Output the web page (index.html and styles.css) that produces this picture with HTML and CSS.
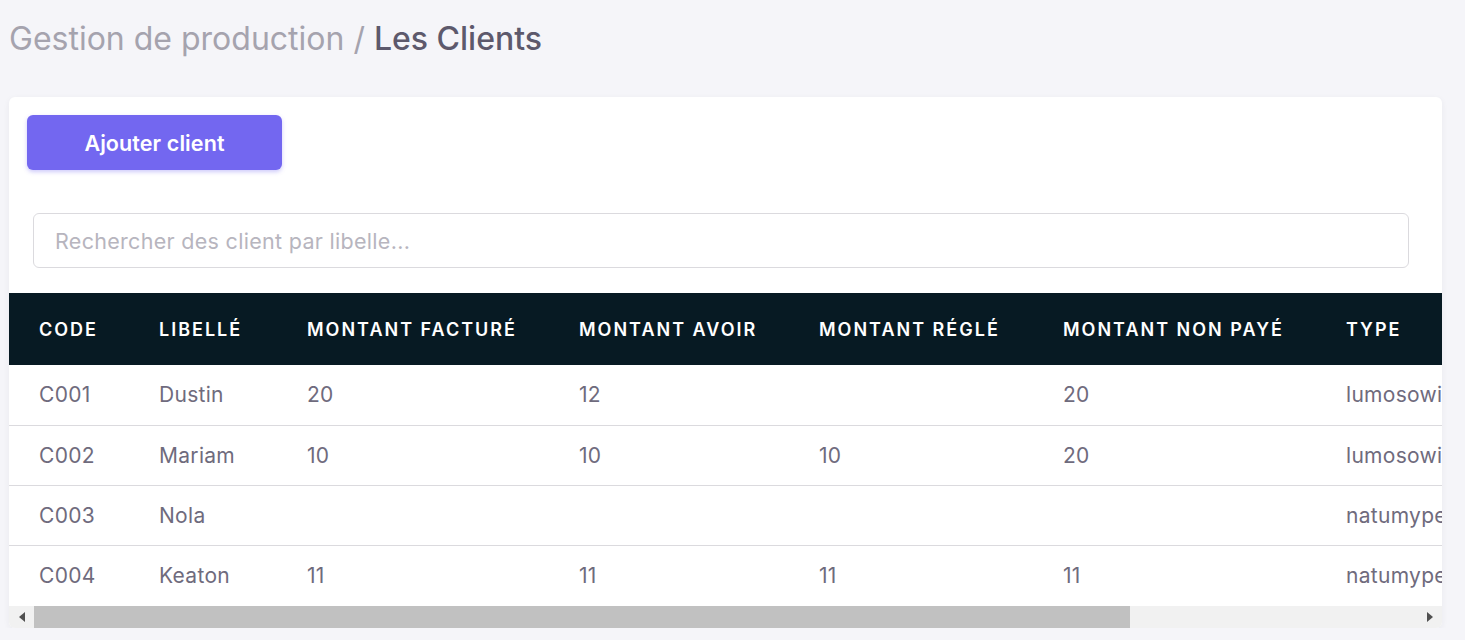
FILE: index.html
```html
<!DOCTYPE html>
<html lang="fr">
<head>
<meta charset="utf-8">
<title>Les Clients</title>
<link rel="stylesheet" href="styles.css">
</head>
<body>
<div class="page">
  <h1 class="title"><span class="crumb">Gestion de production /</span> <span class="current">Les Clients</span></h1>
  <div class="card">
    <div class="card-top">
      <button class="btn-primary" type="button">Ajouter client</button>
    </div>
    <div class="search-wrap">
      <input class="search" type="text" placeholder="Rechercher des client par libelle...">
    </div>
    <div class="table-scroll">
      <div class="table-viewport">
        <table class="clients">
          <colgroup>
            <col class="c-code"><col class="c-lib"><col class="c-fact"><col class="c-avoir"><col class="c-regle"><col class="c-non"><col class="c-type">
          </colgroup>
          <thead>
            <tr><th>Code</th><th>Libellé</th><th>Montant facturé</th><th>Montant avoir</th><th>Montant réglé</th><th>Montant non payé</th><th>Type</th></tr>
          </thead>
          <tbody>
            <tr><td>C001</td><td>Dustin</td><td>20</td><td>12</td><td></td><td>20</td><td>lumosowiresi</td></tr>
            <tr><td>C002</td><td>Mariam</td><td>10</td><td>10</td><td>10</td><td>20</td><td>lumosowiresi</td></tr>
            <tr><td>C003</td><td>Nola</td><td></td><td></td><td></td><td></td><td>natumypebox</td></tr>
            <tr><td>C004</td><td>Keaton</td><td>11</td><td>11</td><td>11</td><td>11</td><td>natumypebox</td></tr>
          </tbody>
        </table>
      </div>
      <div class="hscroll">
        <span class="hs-btn hs-left"></span>
        <div class="hs-track"><div class="hs-thumb"></div></div>
        <span class="hs-btn hs-right"></span>
      </div>
    </div>
  </div>
</div>
</body>
</html>
```
FILE: styles.css
```css
* { box-sizing: border-box; }
html, body { margin: 0; padding: 0; }
body {
  background: #f5f5f9;
  font-family: Inter, "Noto Sans", "Liberation Sans", sans-serif;
  color: #6f6b7d;
  overflow: hidden;
}
.page {
  padding: 0 23px 0 9px;
}
.title {
  margin: 0;
  padding-top: 19px;
  height: 97px;
  font-size: 32px;
  line-height: 40px;
  font-weight: 400;
  letter-spacing: 0;
}
.title .crumb { color: #a5a3ae; }
.title .current { color: #5d596c; font-weight: 500; }

.card {
  background: #fff;
  border-radius: 6px;
  box-shadow: 0 2px 6px rgba(47, 43, 61, 0.06);
  overflow: hidden;
}
.card-top {
  padding: 18px 18px 0;
}
.btn-primary {
  width: 255px;
  height: 55px;
  border: 0;
  border-radius: 6px;
  background: #7367f0;
  color: #fff;
  font-family: inherit;
  font-size: 21.5px;
  font-weight: 600;
  letter-spacing: 0.1px;
  box-shadow: 0 2px 4px rgba(115, 103, 240, 0.35);
  cursor: pointer;
}
.search-wrap {
  padding: 43px 33px 0 24px;
}
.search {
  display: block;
  width: 100%;
  height: 55px;
  border: 1px solid #dbdade;
  border-radius: 6px;
  padding: 0 21px;
  font-family: inherit;
  font-size: 21.5px;
  letter-spacing: 0.3px;
  color: #6f6b7d;
  outline: none;
}
.search::placeholder { color: #b7b5be; }

.table-scroll {
  margin-top: 25px;
}
.table-viewport {
  overflow: hidden;
}
.clients {
  width: 1810px;
  table-layout: fixed;
  border-collapse: collapse;
}
.c-code { width: 120px; }
.c-lib { width: 148px; }
.c-fact { width: 272px; }
.c-avoir { width: 240px; }
.c-regle { width: 244px; }
.c-non { width: 283px; }
.c-type { width: 503px; }
.clients th {
  background: #071a23;
  color: #fff;
  height: 72px;
  padding: 0 0 0 30px;
  text-align: left;
  text-transform: uppercase;
  font-size: 18px;
  font-weight: 600;
  letter-spacing: 2px;
  white-space: nowrap;
}
.clients td {
  height: 60px;
  padding: 0 0 0 30px;
  font-size: 21px;
  letter-spacing: 0.3px;
  color: #6f6b7d;
  border-bottom: 1px solid #dbdade;
  white-space: nowrap;
}
.clients tbody tr:last-child td {
  border-bottom: 0;
  height: 61px;
}

.hscroll {
  display: flex;
  align-items: center;
  height: 22px;
  background: #f1f1f1;
}
.hs-btn {
  width: 25px;
  height: 22px;
  display: flex;
  align-items: center;
  justify-content: center;
  flex: none;
}
.hs-left::before {
  content: "";
  border-top: 5px solid transparent;
  border-bottom: 5px solid transparent;
  border-right: 6px solid #505050;
}
.hs-right::before {
  content: "";
  border-top: 5px solid transparent;
  border-bottom: 5px solid transparent;
  border-left: 6px solid #505050;
}
.hs-track {
  flex: 1;
  height: 22px;
}
.hs-thumb {
  width: 1096px;
  height: 22px;
  background: #c1c1c1;
}
```
